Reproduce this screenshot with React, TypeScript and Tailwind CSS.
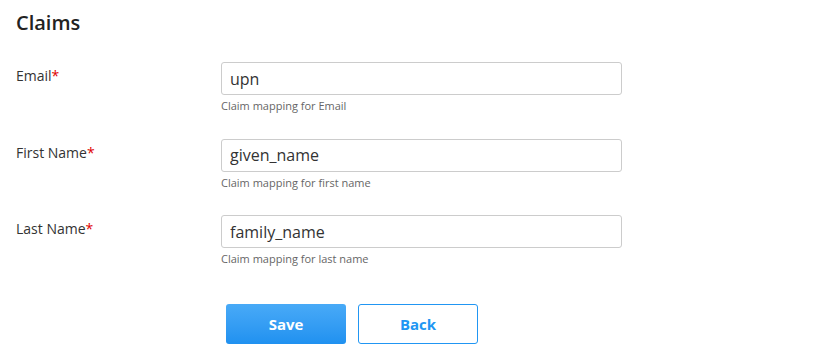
import React from "react";

const rows = [
  { label: "Email", value: "upn", help: "Claim mapping for Email" },
  { label: "First Name", value: "given_name", help: "Claim mapping for first name" },
  { label: "Last Name", value: "family_name", help: "Claim mapping for last name" },
];

const font = "'Open Sans', 'Noto Sans', sans-serif";

export default function App() {
  return (
    <div className="w-[815px] h-[355px] bg-white pl-4 pt-[9px] text-[#333]" style={{ fontFamily: font }}>
      <h1 className="text-[20px] leading-[28px] font-semibold text-[#222]">Claims</h1>
      <div className="mt-[25px] flex flex-col gap-[24.5px]">
        {rows.map((r) => (
          <div key={r.label} className="flex">
            <label className="w-[205px] mt-[4px] text-[14px] leading-5">
              {r.label}
              <span className="text-[#e00000]">*</span>
            </label>
            <div className="w-[401px]">
              <input
                readOnly
                value={r.value}
                className="w-full h-[33px] border border-[#cccccc] rounded-[3px] px-2 text-[16px] text-[#333] outline-none"
                style={{ fontFamily: font }}
              />
              <div className="mt-[3px] text-[11px] leading-4 text-[#666]">{r.help}</div>
            </div>
          </div>
        ))}
      </div>
      <div className="mt-[37px] ml-[210px] flex gap-3">
        <button className="w-[120px] h-[40px] rounded-[3px] bg-gradient-to-b from-[#48aaf7] to-[#1f91f0] text-white font-bold text-[15px]">
          Save
        </button>
        <button className="w-[120px] h-[40px] rounded-[3px] border border-[#2196f3] bg-white text-[#2196f3] font-bold text-[15px]">
          Back
        </button>
      </div>
    </div>
  );
}
